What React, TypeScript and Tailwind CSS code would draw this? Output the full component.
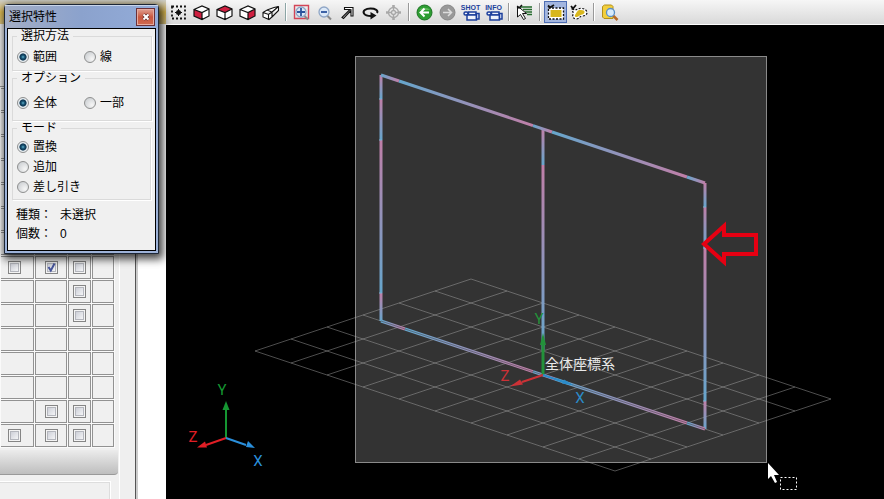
import React, { useState } from "react";
import clsx from "clsx";

type Option = { value: string; label: string };

const methods: Option[] = [
  { value: "range", label: "範囲" },
  { value: "line", label: "線" },
];
const scopes: Option[] = [
  { value: "all", label: "全体" },
  { value: "part", label: "一部" },
];
const modes: Option[] = [
  { value: "replace", label: "置換" },
  { value: "add", label: "追加" },
  { value: "subtract", label: "差し引き" },
];

// "-" no box, "0" unchecked, "1" checked
const rows = [
  "----", "----", "----", "----", "----", "----", "----",
  "010-", "--0-", "--0-", "----", "----", "----", "-00-", "000-",
];

function RadioOption({ name, option, value, onChange }: { name: string; option: Option; value: string; onChange: (v: string) => void }) {
  return (
    <label className="flex h-5 w-[67px] items-center gap-1 whitespace-nowrap">
      <input
        type="radio"
        name={name}
        checked={value === option.value}
        onChange={() => onChange(option.value)}
        className="h-3 w-3 shrink-0 appearance-none rounded-full border border-[#8e8f8f] bg-[radial-gradient(circle_at_70%_70%,#f6f6f6,#c4c8cc)] checked:bg-[radial-gradient(circle_at_50%_50%,#5fb0cc_0,#17506f_25%,#0d3450_45%,#e8eef2_56%)]"
      />
      {option.label}
    </label>
  );
}

function Group({ title, children, className }: { title: string; children: React.ReactNode; className?: string }) {
  return (
    <fieldset className="mx-1 border border-[#dadada] shadow-[1px_1px_0_#fff]">
      <legend className="ml-1 px-1 leading-[14px]">{title}</legend>
      <div className={clsx("flex pl-1", className)}>{children}</div>
    </fieldset>
  );
}

function SelectionDialog() {
  const [method, setMethod] = useState("range");
  const [scope, setScope] = useState("all");
  const [mode, setMode] = useState("replace");

  return (
    <section
      aria-label="選択特性"
      className="absolute left-1 top-1 z-10 w-[155px] rounded-t-sm border border-[#1d2736] bg-[#9db2d8] px-0.5 pb-0.5 text-xs text-black shadow-[2px_3px_9px_2px_rgba(0,0,0,0.75)]"
    >
      <header className="-mx-0.5 flex h-[23px] items-center justify-between bg-linear-to-r from-[#a3adc4] via-[#8ba2cd] to-[#93acd9] pl-1 pr-[3px] shadow-[inset_0_1px_0_#c9d5ea]">
        <h1>選択特性</h1>
        <button
          aria-label="閉じる"
          className="flex h-[18px] w-[19px] items-center justify-center border border-[#6b3038] bg-linear-to-b from-[#dfa193] via-[#c9573f] to-[#cf6a50] shadow-[inset_0_0_0_1px_#e6ab9f]"
        >
          <svg width="8" height="8" viewBox="0 0 8 8">
            <path d="M1.5 1.5l5 5M6.5 1.5l-5 5" stroke="#5e2c2c" strokeWidth="3.2" />
            <path d="M1.5 1.5l5 5M6.5 1.5l-5 5" stroke="#fff" strokeWidth="2" />
          </svg>
        </button>
      </header>
      <div className="border border-black bg-[#f0f0f0] pb-[6px]">
        <Group title="選択方法" className="h-[27px] items-center">
          {methods.map((o) => (
            <RadioOption key={o.value} name="method" option={o} value={method} onChange={setMethod} />
          ))}
        </Group>
        <Group title="オプション" className="h-[35px] items-center">
          {scopes.map((o) => (
            <RadioOption key={o.value} name="scope" option={o} value={scope} onChange={setScope} />
          ))}
        </Group>
        <Group title="モード" className="flex-col py-0.5">
          {modes.map((o) => (
            <RadioOption key={o.value} name="mode" option={o} value={mode} onChange={setMode} />
          ))}
        </Group>
        <dl className="grid grid-cols-[44px_1fr] pl-2 pt-1.5 leading-[19px]">
          <dt>種類：</dt>
          <dd>未選択</dd>
          <dt>個数：</dt>
          <dd>0</dd>
        </dl>
      </div>
    </section>
  );
}

function CellCheck({ checked, label }: { checked: boolean; label: string }) {
  return (
    <span className="relative mx-auto block h-[13px] w-[13px]">
      <input
        type="checkbox"
        aria-label={label}
        defaultChecked={checked}
        className="peer block h-[13px] w-[13px] appearance-none border border-[#858585] bg-linear-to-br from-[#c3c6d0] to-white shadow-[inset_0_0_0_1px_#f4f4f4,inset_0_0_0_2px_#b4b6bd]"
      />
      <svg viewBox="0 0 13 13" className="pointer-events-none absolute inset-0 hidden peer-checked:block">
        <path d="M3.5 6l2.3 3.6L9.5 2.5" fill="none" stroke="#46549a" strokeWidth="2" />
      </svg>
    </span>
  );
}

function PropertyPanel() {
  return (
    <aside className="relative flex w-[166px] shrink-0 flex-col bg-white">
      <div className="h-6 shrink-0 bg-linear-to-b from-[#cfcfc8] via-[#e0bd52] to-[#d9c27c]" />
      <div className="flex flex-1">
        <div className="flex w-[119px] shrink-0 flex-col bg-[#f0f0f0]">
          <div className="h-[63px] shrink-0 border-b border-[#999]" />
          <table className="w-[115px] table-fixed border-separate border-spacing-x-px border-spacing-y-px">
            <colgroup>
              <col className="w-[33px]" />
              <col className="w-[32px]" />
              <col className="w-[23px]" />
              <col className="w-[22px]" />
            </colgroup>
            <tbody>
              {rows.map((row, r) => (
                <tr key={r}>
                  {row.split("").map((cell, c) => (
                    <td
                      key={c}
                      className={clsx(
                        "h-[23px] border border-[#929292] py-0 pl-0 align-middle shadow-[0_0_0_1px_#fafafa]",
                        c === 0 ? "border-l-0 pr-[5px]" : "pr-0"
                      )}
                    >
                      {cell !== "-" && <CellCheck checked={cell === "1"} label={`${r + 1}-${c + 1}`} />}
                    </td>
                  ))}
                </tr>
              ))}
            </tbody>
          </table>
          <div className="mt-[2px] h-[25px] w-[118px] shrink-0 rounded-br border-b border-[#999] bg-linear-to-b from-[#ececec] to-[#bebebe]" />
          <div className="mt-[6px] w-[111px] flex-1 border-r border-t border-white shadow-[inset_-1px_1px_0_#ddd]" />
        </div>
        <div className="w-[16px] border-l border-white bg-[#efefef]" />
        <div className="w-[3px] border-l border-[#555] bg-[#ccc]" />
      </div>
      <SelectionDialog />
    </aside>
  );
}

function Cube({ face }: { face: string }) {
  return (
    <>
      <path d="M1 5.5L9 2l7 3v7L9 15.500l-8-3.500z" fill="#fff" />
      <path d={face} fill="#cf1f40" />
      <path d="M1 5.500L9 2l7 3v7L9 15.500l-8-3.500zM1 5.500l8 3 7-3.500M9 8.500v7" fill="none" stroke="#111" strokeWidth="1.200" />
    </>
  );
}

function Camera({ label }: { label: string }) {
  return (
    <>
      <text x="8.500" y="6" textAnchor="middle" fontSize="7" fontWeight="700" fill="#1c3f9c" fontFamily="Liberation Sans, sans-serif">
        {label}
      </text>
      <g fill="#eef2fb" stroke="#1c3f9c" strokeWidth="1.500">
        <rect x="2" y="8" width="4" height="3" rx="1.500" />
        <path d="M6.500 8h7.500v3H6.500z" />
        <path d="M5 11h9.500v5H5z" />
        <path d="M14.500 9.500h2.500V15h-2.500z" />
      </g>
    </>
  );
}

function Magnifier({ sign }: { sign: string }) {
  return (
    <>
      <path d="M11 11.500l4 4" stroke="#888" strokeWidth="2" />
      <circle cx="8" cy="8" r="5" fill="#dbe8f7" stroke="#8fa6c6" strokeWidth="1.300" />
      <path d={sign} stroke="#2b539c" strokeWidth="1.800" fill="none" />
    </>
  );
}

const icons: Record<string, React.ReactNode> = {
  fit: (
    <>
      <path d="M2 2.500h13v12H2z" fill="none" stroke="#111" strokeWidth="1.800" strokeDasharray="2 2" />
      <circle cx="8.500" cy="8.500" r="2.500" fill="#111" />
      <path d="M8.500 5v7M5 8.500h7" stroke="#111" />
    </>
  ),
  front: <Cube face="M1 5.500l8 3v7l-8-3.500z" />,
  top: <Cube face="M1 5.500L9 2l7 3-7 3.500z" />,
  side: <Cube face="M9 8.500L16 5v7l-7 3.500z" />,
  iso: (
    <path d="M1 8.500l4-2.500 5 2v5L7 15.500 1 13zM1 8.500l5.500 2L10 8M6.500 10.500v5M5 6l7-2.500 4.500-1L10 8M16.500 2.500v4L10 13" fill="#fff" stroke="#111" strokeWidth="1.100" />
  ),
  zoomWindow: (
    <>
      <path d="M1.500 1.500h14v13h-14z" fill="none" stroke="#d34558" strokeWidth="1.400" />
      <Magnifier sign="M8 4v8M4 8h8" />
    </>
  ),
  zoomOut: <Magnifier sign="M5 8h6" />,
  pan: <path d="M3 13.500L11 5.500H5.500V3.500H14V12H12V6.500L4.500 14.500z" fill="#fff" stroke="#111" strokeWidth="1.100" />,
  rotate: (
    <>
      <path d="M15 9c1.500-2.500-1.500-4.500-6.500-4.500S.500 7 2 9.500s4 2.500 7 2.500" fill="none" stroke="#111" strokeWidth="2" />
      <path d="M8.500 8l6 3.500-6 4z" fill="#111" />
    </>
  ),
  target: (
    <g fill="none" stroke="#a8a8a8" strokeWidth="1.300">
      <circle cx="8.500" cy="8.500" r="5" />
      <circle cx="8.500" cy="8.500" r="2" />
      <path d="M8.500 1v6M8.500 10v6M1 8.500h6M10 8.500h6M7 2h3M7 15h3M2 7v3M15 7v3" />
    </g>
  ),
  back: (
    <>
      <circle cx="8.500" cy="8.500" r="7.500" fill="#2d9d32" stroke="#1d7424" />
      <path d="M3 6a6.500 5 0 0111 0" fill="#7dcb73" opacity=".6" />
      <path d="M13 8.500H5M8.500 4.500l-4 4 4 4" fill="none" stroke="#fff" strokeWidth="2" />
    </>
  ),
  forward: (
    <>
      <circle cx="8.500" cy="8.500" r="7.500" fill="#999" stroke="#888" />
      <path d="M4 8.500h8M9 5l3.500 3.500L9 12" fill="none" stroke="#ddd" strokeWidth="1.500" />
    </>
  ),
  shot: <Camera label="SHOT" />,
  info: <Camera label="INFO" />,
  pick: (
    <>
      <path d="M4 3h12M7 5.500h9M9 8h7M11 10.500h5" stroke="#256b2c" strokeWidth="1.500" />
      <path d="M1.500 2v11l3-2.500 3 5 2-1-3-5h4z" fill="#fff" stroke="#111" />
      <path d="M1 2.500L3 4 6 1" fill="none" stroke="#111" strokeWidth="1.500" />
    </>
  ),
  rect: (
    <>
      <path d="M1.500 4h15v11h-15z" fill="#fff" stroke="#111" strokeWidth="1.300" strokeDasharray="2 1.500" />
      <path d="M3.500 6h11v7h-11z" fill="#d8b71c" />
      <path d="M1 1.500l2 2L7 1" fill="none" stroke="#111" strokeWidth="1.800" />
    </>
  ),
  lasso: (
    <>
      <path d="M2 5c3 1 4 1 6 0s7-1 8.500 2-1 5-4 5-3 3-6 3-4.500-2.500-3.500-4.500S2 7 2 5z" fill="#fff" stroke="#111" strokeWidth="1.200" strokeDasharray="2 1.500" />
      <path d="M8 6.500c3-1 7-.500 6.500 2S11 10 9 12s-5 1-4-1 2-3 3-4.500z" fill="#d8b71c" />
      <path d="M1 2l2 2.500L6 1" fill="none" stroke="#111" strokeWidth="1.800" />
    </>
  ),
  search: (
    <>
      <path d="M1.500 2.500l2-1.500h7l1.500 1.500v12H3l-1.500-1.500z" fill="#f2cf3d" stroke="#b3901a" />
      <path d="M12 11.500l4.500 4.500" stroke="#b86a27" strokeWidth="2.500" />
      <circle cx="9.500" cy="8.500" r="4" fill="#d7ebfb" stroke="#5b8fc4" strokeWidth="1.300" />
    </>
  ),
};

const toolGroups = [
  ["fit", "front", "top", "side", "iso"],
  ["zoomWindow", "zoomOut", "pan", "rotate", "target"],
  ["back", "forward", "shot", "info"],
  ["pick"],
  ["rect", "lasso"],
  ["search"],
];

function Toolbar() {
  const [active, setActive] = useState("rect");
  return (
    <div role="toolbar" className="flex h-[25px] shrink-0 items-center border-b border-white bg-linear-to-b from-[#f6f6f6] to-[#d9d9d9] pl-px">
      {toolGroups.map((group, i) => (
        <React.Fragment key={i}>
          {i > 0 && <div className={clsx("mx-[3px] h-[18px] w-0.5 border-r border-white", i === 1 ? "bg-[#8ca5a5]" : "bg-[#999]")} />}
          {group.map((id) => (
            <button
              key={id}
              aria-label={id}
              onClick={() => setActive(id)}
              className={clsx("flex h-[22px] w-[23px] items-center justify-center border", active === id ? "border-[#4d6db3] bg-[#a3b6df]" : "border-transparent")}
            >
              <svg width="17" height="17" viewBox="0 0 17 17" className="shrink-0 overflow-visible">
                {icons[id]}
              </svg>
            </button>
          ))}
        </React.Fragment>
      ))}
    </div>
  );
}

const PINK = "#c07fa8";
const BLUE = "#66a6cc";

// x1, y1, x2, y2 of every coloured piece of the frame
const members = [
  [381, 75, 381, 99], [381, 99, 381, 140], [381, 140, 381, 293], [381, 293, 381, 321],
  [543, 129, 543, 165], [543, 165, 543, 350],
  [705, 183, 705, 207], [705, 207, 705, 248], [705, 248, 705, 401], [705, 401, 705, 429],
  [399, 81, 381, 75], [533, 125.600, 399, 81], [552, 132, 533, 125.600], [687, 177, 552, 132], [705, 183, 687, 177],
];
const baseMembers = [
  [405, 329, 381, 321], [533, 371.600, 405, 329], [555, 379, 533, 371.600], [687, 423, 555, 379], [705, 429, 687, 423],
];

function Members({ prefix, list }: { prefix: string; list: number[][] }) {
  return (
    <>
      {list.map(([x1, y1, x2, y2], i) => (
        <g key={i}>
          <linearGradient id={prefix + i} gradientUnits="userSpaceOnUse" x1={x1} y1={y1} x2={x2} y2={y2}>
            <stop offset="0" stopColor={PINK} />
            <stop offset="1" stopColor={BLUE} />
          </linearGradient>
          <path d={`M${x1} ${y1}L${x2} ${y2}`} stroke={`url(#${prefix + i})`} strokeWidth="3" />
        </g>
      ))}
    </>
  );
}

function FloorGrid() {
  const lines: string[] = [];
  for (let i = 0; i <= 10; i++) lines.push(`M${255 + 36 * i} ${351 + 12 * i}l216 -72`);
  for (let i = 0; i <= 6; i++) lines.push(`M${255 + 36 * i} ${351 - 12 * i}l360 120`);
  return <path d={lines.join("")} stroke="#aaa" strokeOpacity="0.45" fill="none" />;
}

function Viewport() {
  return (
    <div className="min-h-0 flex-1 overflow-hidden bg-black">
      <svg viewBox="166 25 718 474" preserveAspectRatio="xMinYMin meet" className="block h-full w-full">
        <rect x="355.500" y="56.500" width="411" height="406" fill="#333" stroke="#8a8a8a" />
        <FloorGrid />
        <Members prefix="m" list={members} />
        <Members prefix="b" list={baseMembers} />
        <path d="M381 321L705 429" stroke="#333" strokeOpacity="0.45" />
        <path d="M379 99h3M379 140h3M379 293h3M703 207h3M703 248h3M703 401h3" stroke="#7fb0d0" />

        <g strokeWidth="2" fontFamily="Roboto, sans-serif" fontSize="15" textAnchor="middle">
          <path d="M226 438V408" stroke="#159632" />
          <path d="M226 401l3.500 9h-7z" fill="#159632" />
          <path d="M226 438l-20 7" stroke="#e11e25" />
          <path d="M197 447.500l8-6 2 6z" fill="#e11e25" />
          <path d="M226 438l20 7" stroke="#2a8fdb" />
          <path d="M255 448l-7-7-2 6z" fill="#2a8fdb" />
          <text x="222" y="395" fill="#159632">Y</text>
          <text x="193" y="442" fill="#e11e25">Z</text>
          <text x="258" y="466" fill="#2a8fdb">X</text>

          <path d="M543 375V345" stroke="#23913a" strokeWidth="3" />
          <path d="M543 333l3 12h-6z" fill="#23913a" />
          <path d="M543 375l-21 7" stroke="#cc3136" />
          <path d="M510 386.500l10-7 3 5z" fill="#cc3136" />
          <path d="M543 375l21 7" stroke="#2b8bc8" />
          <path d="M574 385.500l-10-6-2 4z" fill="#2b8bc8" />
          <text x="539" y="324" fill="#23913a">Y</text>
          <text x="505" y="381" fill="#cc3136">Z</text>
          <text x="580" y="403" fill="#2b8bc8">X</text>
        </g>
        <text x="545" y="369" fontSize="14" fill="#e8e8e8" fontFamily="Noto Sans CJK JP, sans-serif">全体座標系</text>

        <path d="M704 244L724 226V235H756V254H724V262Z" fill="none" stroke="#e60012" strokeWidth="4" />

        <path d="M768 463v16l3-3 4 7 2-1-3-7h5z" fill="#fff" />
        <path d="M780.500 477.500h16v12h-16z" fill="none" stroke="#fff" strokeDasharray="2 2" />
      </svg>
    </div>
  );
}

export default function App() {
  return (
    <div className="flex h-screen overflow-hidden bg-black font-['Liberation_Sans','Noto_Sans_CJK_JP',sans-serif]">
      <PropertyPanel />
      <main className="flex min-w-0 flex-1 flex-col">
        <Toolbar />
        <Viewport />
      </main>
    </div>
  );
}
